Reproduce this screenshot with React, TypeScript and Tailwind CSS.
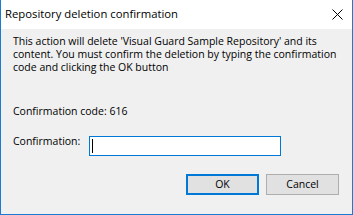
import React from 'react';

const font = { fontFamily: '"Open Sans", "Noto Sans", sans-serif' };

export default function App() {
  return (
    <div
      className="w-[353px] h-[215px] flex flex-col border-x border-b border-[#1a7bd0] bg-[#f0f0f0] text-[10.5px] text-black whitespace-nowrap overflow-hidden"
      style={font}
    >
      {/* title bar */}
      <div className="h-[29px] shrink-0 bg-white flex items-start justify-between pl-[4px] pr-[9px]">
        <span className="mt-[6px] leading-[15px] text-[11.3px]">Repository deletion confirmation</span>
        <svg width="11" height="11" viewBox="0 0 11 11" className="mt-[9px]">
          <path d="M0.5 0.5L10.5 10.5M10.5 0.5L0.5 10.5" stroke="#000" strokeWidth="1" />
        </svg>
      </div>

      <div className="flex-1 flex flex-col pl-[12px] pr-[13px]">
        <p className="mt-[6px] leading-[13px]">
          This action will delete 'Visual Guard Sample Repository' and its
          <br />
          content. You must confirm the deletion by typing the confirmation
          <br />
          code and clicking the OK button
        </p>

        <div className="mt-[31px] leading-[13px]">Confirmation code: 616</div>

        <div className="mt-[18px] flex items-start">
          <span className="w-[76px] shrink-0 leading-[13px] mt-[-1px]">Confirmation:</span>
          <div className="w-[192px] h-[20px] bg-white border border-[#0078d7] flex items-center pl-[2px]">
            <div className="w-px h-[14px] bg-black" />
          </div>
        </div>

        <div className="mt-[18px] flex justify-end gap-[7px]">
          <button className="w-[73px] h-[21px] bg-[#e1e1e1] border-2 border-[#0078d7] flex items-center justify-center">
            OK
          </button>
          <button className="w-[73px] h-[21px] bg-[#e1e1e1] border border-[#adadad] flex items-center justify-center">
            Cancel
          </button>
        </div>
      </div>
    </div>
  );
}
